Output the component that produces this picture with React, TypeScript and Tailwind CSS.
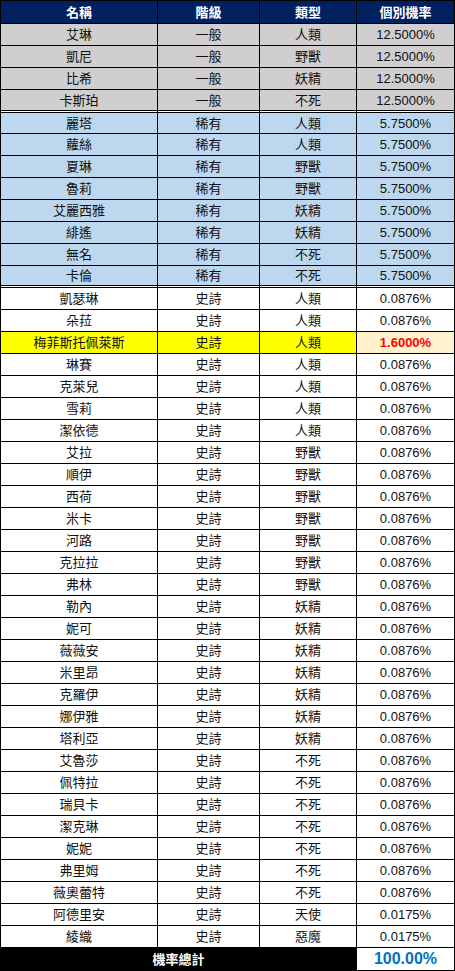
import React from "react";

const FONT = { fontFamily: '"Liberation Sans", "Noto Sans CJK TC", sans-serif' };

type R = [string, string, string, string];

const common: R[] = [
  ["艾琳", "一般", "人類", "12.5000%"],
  ["凱尼", "一般", "野獸", "12.5000%"],
  ["比希", "一般", "妖精", "12.5000%"],
  ["卡斯珀", "一般", "不死", "12.5000%"],
];

const rare: R[] = [
  ["麗塔", "稀有", "人類", "5.7500%"],
  ["蘿絲", "稀有", "人類", "5.7500%"],
  ["夏琳", "稀有", "野獸", "5.7500%"],
  ["魯莉", "稀有", "野獸", "5.7500%"],
  ["艾麗西雅", "稀有", "妖精", "5.7500%"],
  ["緋遙", "稀有", "妖精", "5.7500%"],
  ["無名", "稀有", "不死", "5.7500%"],
  ["卡倫", "稀有", "不死", "5.7500%"],
];

const epicNames: [string, string][] = [
  ["凱瑟琳", "人類"],
  ["朵菈", "人類"],
  ["梅菲斯托佩萊斯", "人類"],
  ["琳賽", "人類"],
  ["克萊兒", "人類"],
  ["雪莉", "人類"],
  ["潔依德", "人類"],
  ["艾拉", "野獸"],
  ["順伊", "野獸"],
  ["西荷", "野獸"],
  ["米卡", "野獸"],
  ["河路", "野獸"],
  ["克拉拉", "野獸"],
  ["弗林", "野獸"],
  ["勒內", "妖精"],
  ["妮可", "妖精"],
  ["薇薇安", "妖精"],
  ["米里昂", "妖精"],
  ["克羅伊", "妖精"],
  ["娜伊雅", "妖精"],
  ["塔利亞", "妖精"],
  ["艾魯莎", "不死"],
  ["佩特拉", "不死"],
  ["瑞貝卡", "不死"],
  ["潔克琳", "不死"],
  ["妮妮", "不死"],
  ["弗里姆", "不死"],
  ["薇奧蕾特", "不死"],
  ["阿德里安", "天使"],
  ["綾織", "惡魔"],
];

const GRID = "grid grid-cols-[157px_102px_97px_98px]";
const CELL = "flex items-center justify-center border-r border-black whitespace-nowrap";

function Row({ r, rowCls, last4Cls, cellsCls }: { r: R; rowCls: string; last4Cls?: string; cellsCls?: string }) {
  return (
    <div className={`${GRID} ${rowCls}`}>
      <div className={`${CELL} ${cellsCls ?? ""}`}>{r[0]}</div>
      <div className={`${CELL} ${cellsCls ?? ""}`}>{r[1]}</div>
      <div className={`${CELL} ${cellsCls ?? ""}`}>{r[2]}</div>
      <div className={`${CELL} ${last4Cls ?? ""}`}>{r[3]}</div>
    </div>
  );
}

function Sep() {
  return (
    <div className={`${GRID} h-[3px] border-y border-black bg-white`}>
      <div className="border-r border-black" />
      <div className="border-r border-black" />
      <div className="border-r border-black" />
      <div className="border-r border-black" />
    </div>
  );
}

export default function App() {
  return (
    <div className="w-[455px] bg-white text-[13px] leading-none text-[#111]" style={FONT}>
      <div className="w-[455px] border-l border-black">
        {/* header */}
        <div className={`${GRID} h-[24px] border-y border-black bg-[#002060] text-white font-bold`}>
          <div className={CELL}>名稱</div>
          <div className={CELL}>階級</div>
          <div className={CELL}>類型</div>
          <div className={CELL}>個別機率</div>
        </div>
        {common.map((r, i) => (
          <Row
            key={r[0]}
            r={r}
            rowCls={i < 3 ? "h-[22px] border-b border-black bg-[#d0cece]" : "h-[20px] bg-[#d0cece]"}
          />
        ))}
        <Sep />
        {rare.map((r, i) => (
          <Row
            key={r[0]}
            r={r}
            rowCls={
              i === 0
                ? "h-[21px] border-b border-black bg-[#bdd7ee]"
                : i === 7
                ? "h-[19px] bg-[#bdd7ee]"
                : "h-[22px] border-b border-black bg-[#bdd7ee]"
            }
          />
        ))}
        <Sep />
        {epicNames.map(([n, t]) => {
          const hi = n === "梅菲斯托佩萊斯";
          const v = hi ? "1.6000%" : t === "天使" || t === "惡魔" ? "0.0175%" : "0.0876%";
          return (
            <Row
              key={n}
              r={[n, "史詩", t, v]}
              rowCls="h-[22px] border-b border-black bg-white"
              cellsCls={hi ? "bg-[#ffff00]" : ""}
              last4Cls={hi ? "bg-[#fff2cc] text-[#ff0000] font-bold" : ""}
            />
          );
        })}
        {/* total */}
        <div className={`${GRID} h-[23px] border-b border-black`}>
          <div className="col-span-3 flex items-center justify-center border-r border-black bg-black text-white font-bold">
            機率總計
          </div>
          <div className={`${CELL} bg-white text-[16px] font-bold text-[#0070c0]`}>100.00%</div>
        </div>
      </div>
    </div>
  );
}
